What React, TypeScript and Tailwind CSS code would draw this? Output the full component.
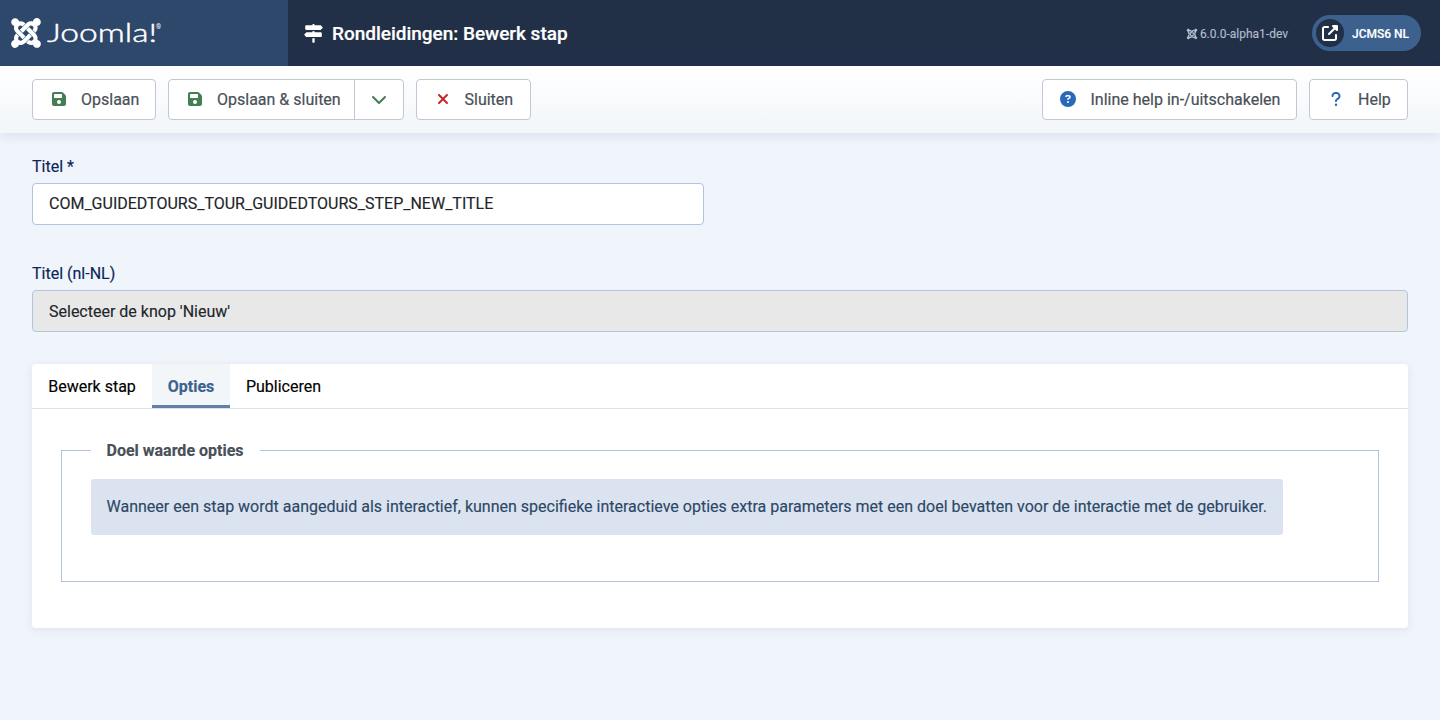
import React from "react";
import { FaJoomla, FaFloppyDisk, FaSignsPost, FaChevronDown, FaXmark, FaCircleQuestion, FaQuestion, FaUpRightFromSquare } from "react-icons/fa6";

const button =
  "flex h-[41px] items-center rounded-[4px] border border-[#c0c8d6] bg-white text-[16px] text-[#495057] [-webkit-text-stroke:0.2px]";

function Header() {
  return (
    <header className="flex h-[66px] bg-[#212f47] text-white">
      <div className="flex w-[288px] items-center bg-[#2e486b] pl-[9px]">
        <FaJoomla className="h-[34px] w-[34px] shrink-0" />
        <svg className="ml-[3px] h-[40px] w-[118px] shrink-0" viewBox="0 0 118 40" fill="white">
          <text x="1" y="29" fontSize="26" fontWeight="300" fontFamily="Lato, sans-serif" textLength="110" lengthAdjust="spacingAndGlyphs" stroke="white" strokeWidth="0.45">Joomla!</text>
          <text x="110" y="16" fontSize="6.5" fontFamily="Roboto, sans-serif">®</text>
        </svg>
      </div>
      <div className="flex flex-1 items-center pl-4 pr-[19px]">
        <FaSignsPost className="h-[19px] w-[19px]" />
        <h1 className="ml-[9px] pt-px text-[19px] font-medium tracking-[-0.02px] [-webkit-text-stroke:0.2px]">Rondleidingen: Bewerk stap</h1>
        <div className="ml-auto flex items-center pt-px text-[12px] text-[#b3bccb] [-webkit-text-stroke:0.15px]">
          <FaJoomla className="mr-[2px] h-[12px] w-[12px]" />
          6.0.0-alpha1-dev
        </div>
        <a className="ml-6 flex h-9 w-[109px] items-center rounded-full bg-[#3d618f] pl-1 text-[12px] font-medium [-webkit-text-stroke:0.15px]">
          <span className="mr-2 flex h-7 w-7 items-center justify-center rounded-full bg-[#212f47]">
            <FaUpRightFromSquare className="h-4 w-4" />
          </span>
          <span className="pt-px">JCMS6 NL</span>
        </a>
      </div>
    </header>
  );
}

function Toolbar() {
  return (
    <div className="flex h-[67px] items-center gap-3 bg-linear-to-b from-white to-[#f2f6f9] px-8 shadow-[0_3px_10px_rgba(60,90,150,0.12)]">
      <button className={`${button} w-[124px] pl-[18px]`}>
        <FaFloppyDisk className="mr-[14px] mb-px h-4 w-4 text-[#457d54]" />
        Opslaan
      </button>
      <div className={`${button} w-[236px]`}>
        <button className="flex h-full w-[186px] items-center border-r border-[#c0c8d6] pl-[18px] whitespace-nowrap">
          <FaFloppyDisk className="mr-[14px] mb-px h-4 w-4 shrink-0 text-[#457d54]" />
          Opslaan &amp; sluiten
        </button>
        <button className="flex flex-1 justify-center">
          <FaChevronDown className="mb-px h-4 w-4 text-[#457d54]" />
        </button>
      </div>
      <button className={`${button} w-[115px] pl-[18px]`}>
        <FaXmark className="mr-[13.5px] mb-[2px] h-4 w-4 text-[#c52827]" />
        Sluiten
      </button>
      <button className={`${button} ml-auto w-[255px] pl-[17px]`}>
        <FaCircleQuestion className="mr-[14.5px] mb-[2px] h-4 w-4 text-[#2a69b8]" />
        Inline help in-/uitschakelen
      </button>
      <button className={`${button} w-[99px] pl-[18px]`}>
        <FaQuestion className="mr-[14px] mb-[2px] h-4 w-4 text-[#2a69b8]" />
        Help
      </button>
    </div>
  );
}

export default function App() {
  return (
    <div className="h-[720px] overflow-hidden bg-[#f0f4fb] font-['Roboto',sans-serif] text-[16px] leading-6">
      <Header />
      <Toolbar />
      <main className="px-8 pt-[22px] [-webkit-text-stroke:0.15px]">
        <label className="block text-[#0b2559]">Titel *</label>
        <div className="mt-1 flex h-[42px] w-[672px] items-center rounded-[4px] border border-[#b2c5e0] bg-white px-4 text-[#212529]">
          COM_GUIDEDTOURS_TOUR_GUIDEDTOURS_STEP_NEW_TITLE
        </div>
        <label className="mt-[37px] block text-[#0b2559]">Titel (nl-NL)</label>
        <div className="mt-1 flex h-[42px] items-center rounded-[4px] border border-[#b2c5e0] bg-[#e8e8e8] px-4 pt-[2px] text-[#212529]">
          Selecteer de knop 'Nieuw'
        </div>
        <section className="mt-8 h-[264px] rounded-[4px] bg-white shadow-[0_2px_8px_rgba(60,90,150,0.1)]">
          <nav className="flex h-[45px] border-b border-[#d9e3f0] text-black">
            <button className="w-[120px] pt-[2px]">Bewerk stap</button>
            <button className="w-[78px] border-b-[3px] border-[#6480a8] bg-[#f2f6f9] pt-[5px] font-bold text-[#3d618f]">Opties</button>
            <button className="w-[107px] pt-[2px]">Publiceren</button>
          </nav>
          <fieldset className="mx-[29px] mt-[29px] h-[144px] border border-[#b2c5e0] px-[29px]">
            <legend className="pt-[2px] pr-4 pl-[15.5px] leading-[22px] font-bold text-[#495057]">Doel waarde opties</legend>
            <div className="mt-[17px] flex h-14 w-[1192px] items-center rounded-[3px] bg-[#dce3f0] px-[15.5px] whitespace-nowrap text-[#2c4867]">
              Wanneer een stap wordt aangeduid als interactief, kunnen specifieke interactieve opties extra parameters met een doel bevatten voor de interactie met de gebruiker.
            </div>
          </fieldset>
        </section>
      </main>
    </div>
  );
}
